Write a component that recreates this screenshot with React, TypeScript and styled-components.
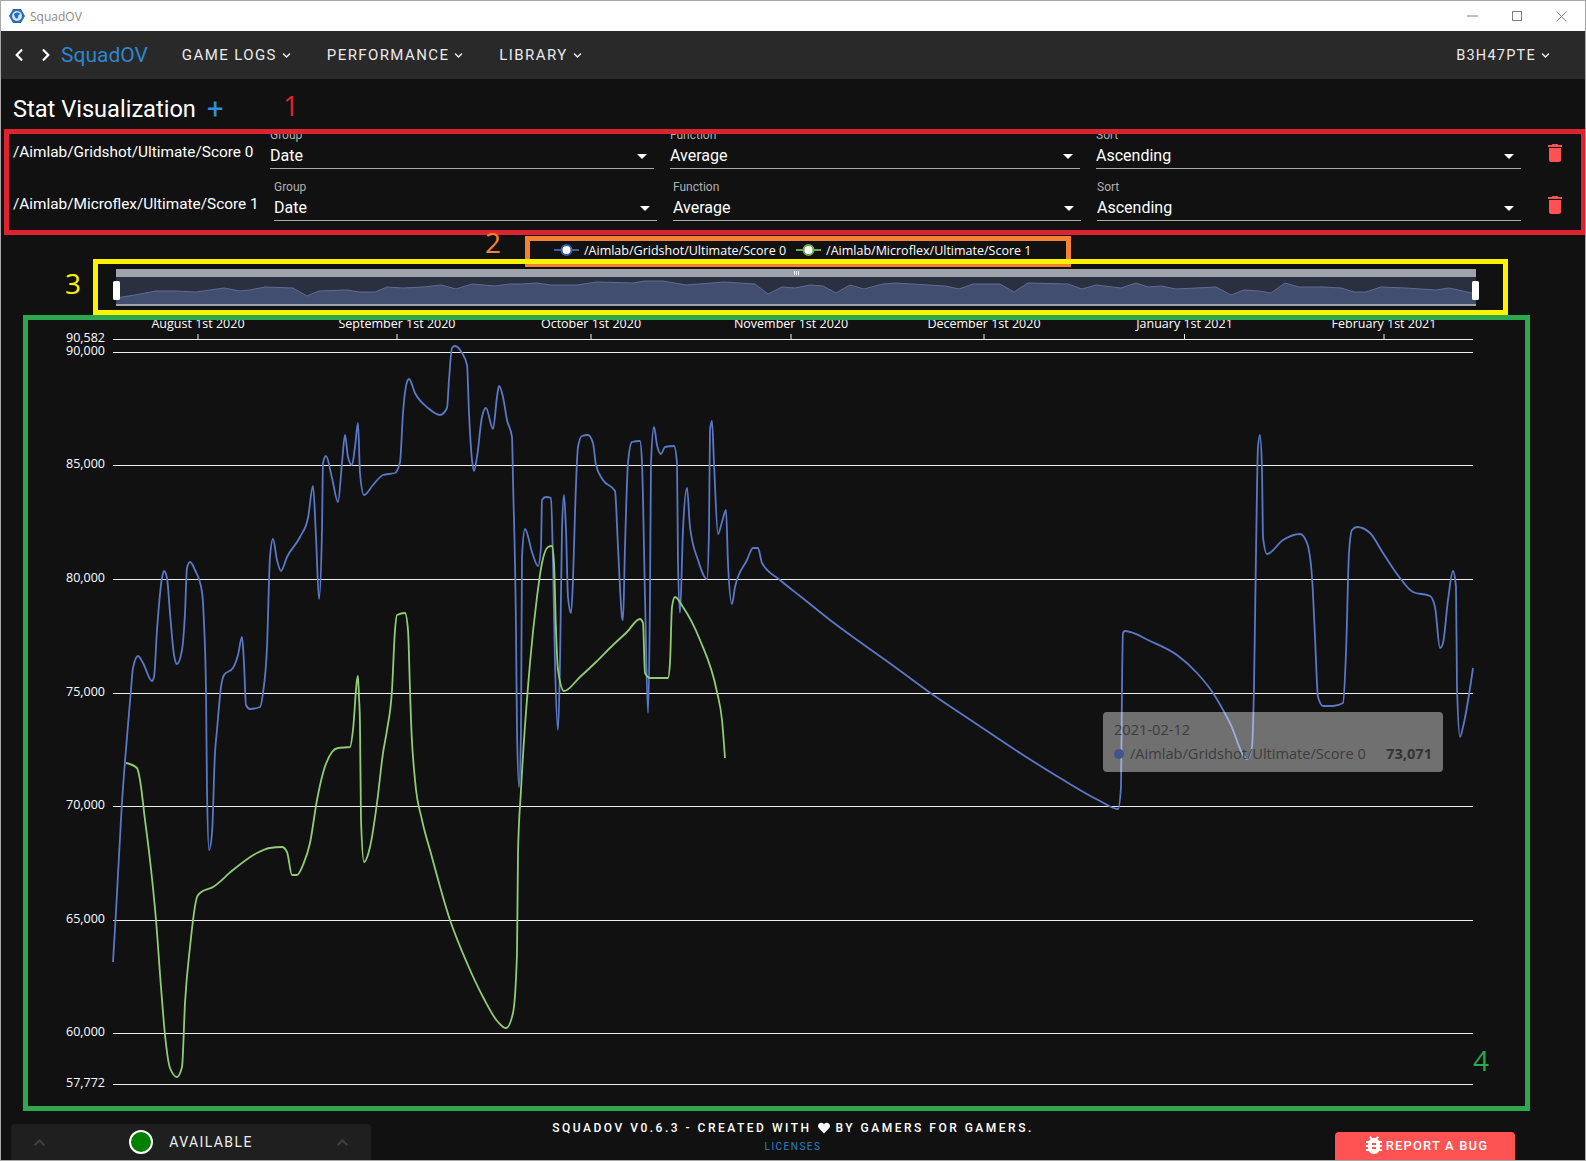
import React from "react";
import styled, { createGlobalStyle } from "styled-components";
import { FaChevronDown, FaChevronLeft, FaChevronRight, FaChevronUp, FaHeart } from "react-icons/fa";

type Pt = [number, number];

const sign = (v: number) => (v < 0 ? -1 : 1);

const smooth = (p: Pt[]) => {
  const n = p.length;
  const t: number[] = new Array(n).fill(0);
  for (let i = 1; i < n - 1; i++) {
    const h0 = p[i][0] - p[i - 1][0];
    const h1 = p[i + 1][0] - p[i][0];
    const s0 = (p[i][1] - p[i - 1][1]) / h0;
    const s1 = (p[i + 1][1] - p[i][1]) / h1;
    const m = (s0 * h1 + s1 * h0) / (h0 + h1);
    t[i] = (sign(s0) + sign(s1)) * Math.min(Math.abs(s0), Math.abs(s1), 0.5 * Math.abs(m));
  }
  t[0] = (3 * (p[1][1] - p[0][1])) / (p[1][0] - p[0][0]) / 2 - t[1] / 2;
  t[n - 1] = (3 * (p[n - 1][1] - p[n - 2][1])) / (p[n - 1][0] - p[n - 2][0]) / 2 - t[n - 2] / 2;
  let d = `M${p[0][0]} ${p[0][1]}`;
  for (let i = 0; i < n - 1; i++) {
    const dx = (p[i + 1][0] - p[i][0]) / 3;
    d += ` C${(p[i][0] + dx).toFixed(1)} ${(p[i][1] + dx * t[i]).toFixed(1)} ${(p[i + 1][0] - dx).toFixed(1)} ${(p[i + 1][1] - dx * t[i + 1]).toFixed(1)} ${p[i + 1][0]} ${p[i + 1][1]}`;
  }
  return d;
};

const straight = (p: Pt[]) => "M" + p.map((q) => `${q[0]} ${q[1]}`).join(" L");

const blue: Pt[] = [
  [113,962],[115.7,917],[121.7,807],[128,725],[130.7,693],[133,668],[138,656],[143,663],[152,681],[154,677],[157,630],[162,578],[164,571],[167,578],[170,613],[174,655],[177,664],[182,650],[185,613],[187,568],[190,562],[195,570],[202,592],[204,623],[206,690],[207,790],[209,850],[212,833],[215,753],[217,730],[221,687],[224,675],[233,668],[238,655],[242,637],[244,663],[246,705],[250,709],[260,707],[263,693],[267,647],[270,557],[273,539],[277,560],[281,571],[287,557],[300,537],[308,518],[313,486],[316,537],[319,599],[322,530],[323,463],[326,456],[332,478],[338,502],[342,463],[345,435],[348,457],[352,465],[355,447],[358,423],[360,473],[364,495],[373,485],[383,475],[395,473],[400,462],[403,413],[407,382],[409,379],[415,393],[428,408],[440,415],[447,408],[449,380],[452,348],[455,346],[462,353],[467,365],[469,413],[472,460],[474,471],[477,457],[482,417],[486,408],[493,429],[497,397],[499,386],[503,397],[507,420],[512,437],[513,480],[516,630],[517,730],[519,787],[521,730],[522,557],[525,529],[532,552],[538,566],[541,547],[542,500],[546,497],[551,498],[553,563],[555,663],[558,730],[560,663],[562,530],[564,495],[566,530],[568,597],[571,613],[573,580],[575,513],[578,447],[582,436],[588,435],[593,443],[596,465],[603,480],[615,491],[618,547],[622,617],[623,620],[625,547],[628,463],[632,442],[640,441],[642,463],[645,597],[648,713],[650,597],[651,463],[654,427],[657,445],[661,454],[665,447],[674,446],[677,463],[678,563],[680,613],[683,530],[687,488],[690,527],[698,560],[707,579],[709,530],[710,430],[712,421],[714,463],[718,534],[722,522],[726,510],[728,563],[732,604],[735,587],[747,560],[753,548],[758,548],[762,563],[780,580],[800,596],[830,620],[860,642],[895,667],[929,692],[975,723],[1020,753],[1060,778],[1100,801],[1118,809],[1121,787],[1122,687],[1123,633],[1125,631],[1150,641],[1177,655],[1197,673],[1213,693],[1230,723],[1247,759],[1252,747],[1254,687],[1256,553],[1258,447],[1260,435],[1262,470],[1263,537],[1267,554],[1283,540],[1300,534],[1307,543],[1312,577],[1315,637],[1318,697],[1323,706],[1333,706],[1343,703],[1346,653],[1349,553],[1352,530],[1357,527],[1370,533],[1383,553],[1400,578],[1413,592],[1430,596],[1435,607],[1440,648],[1443,643],[1448,600],[1453,571],[1456,587],[1457,687],[1460,737],[1463,727],[1473,668],
];

const green: Pt[] = [
  [126,763],[137,768],[140,780],[145,820],[150,860],[156,920],[161,987],[165,1035],[170,1068],[177,1077],[182,1067],[185,1003],[190,947],[197,897],[200,893],[213,887],[233,870],[257,853],[270,848],[282,847],[287,852],[292,875],[297,875],[303,865],[310,843],[317,800],[323,773],[332,752],[338,748],[350,747],[353,730],[357,680],[358,676],[359,697],[360,725],[361,820],[364,862],[370,847],[377,803],[383,753],[387,730],[392,690],[395,630],[397,615],[405,613],[408,630],[410,690],[411,720],[415,780],[422,820],[430,850],[450,920],[467,963],[483,997],[498,1022],[506,1028],[513,1013],[517,953],[518,853],[521,790],[530,663],[537,597],[542,563],[548,547],[552,546],[554,563],[556,630],[558,670],[564,691],[580,677],[596,662],[613,645],[627,632],[640,619],[643,623],[645,673],[650,678],[668,678],[670,663],[672,607],[675,597],[683,607],[700,640],[717,692],[722,720],[725,758],
];

const overview: Pt[] = [
  [116,298],[135,295],[156,291],[176,291],[196,292],[224,288],[240,291],[250,290],[265,287],[293,288],[307,296],[319,291],[347,290],[360,292],[375,292],[387,287],[403,288],[423,287],[441,285],[456,289],[472,284],[495,286],[510,284],[523,284],[536,283],[551,285],[577,285],[597,282],[633,283],[645,281],[663,281],[686,285],[712,283],[724,282],[755,284],[768,294],[782,287],[795,288],[810,285],[823,286],[836,293],[850,285],[864,289],[883,284],[895,283],[945,286],[959,289],[973,284],[1000,284],[1014,292],[1028,283],[1068,284],[1082,289],[1096,285],[1121,288],[1136,283],[1148,287],[1161,286],[1176,289],[1216,287],[1231,295],[1244,290],[1259,291],[1271,293],[1285,283],[1299,287],[1324,287],[1341,288],[1354,292],[1366,292],[1381,287],[1406,288],[1436,290],[1449,288],[1472,293],
];

const hLines = [
  { y: 339.5, label: "90,582" },
  { y: 352.5, label: "90,000" },
  { y: 465.5, label: "85,000" },
  { y: 579.5, label: "80,000" },
  { y: 693.5, label: "75,000" },
  { y: 806.5, label: "70,000" },
  { y: 920.5, label: "65,000" },
  { y: 1033.5, label: "60,000" },
  { y: 1084.5, label: "57,772" },
];

const ticks = [
  { x: 198, label: "August 1st 2020" },
  { x: 397, label: "September 1st 2020" },
  { x: 591, label: "October 1st 2020" },
  { x: 791, label: "November 1st 2020" },
  { x: 984, label: "December 1st 2020" },
  { x: 1184.5, label: "January 1st 2021" },
  { x: 1384, label: "February 1st 2021" },
];

const rows = [
  { name: "/Aimlab/Gridshot/Ultimate/Score 0", cols: "257px 400px 426px 441px 1fr" },
  { name: "/Aimlab/Microflex/Ultimate/Score 1", cols: "261px 399px 424px 440px 1fr" },
];

const GlobalStyle = createGlobalStyle`
  html, body { margin: 0; padding: 0; background: #111; }
  * { box-sizing: border-box; }
`;

const Frame = styled.div`
  position: relative;
  width: 1586px;
  height: 1161px;
  border: 1px solid #a8a8a8;
  background: #111;
  color: #fff;
  font-family: Roboto, "Liberation Sans", sans-serif;
  display: flex;
  flex-direction: column;
  overflow: hidden;
`;

const TitleBar = styled.div`
  height: 30px;
  flex: none;
  background: #fff;
  display: flex;
  align-items: center;
  padding-left: 8px;
  gap: 5px;
  font-family: "Open Sans", sans-serif;
  font-size: 12px;
  color: #8a8a8a;
`;

const WindowControls = styled.div`
  margin-left: auto;
  display: flex;
  align-items: center;
  padding-right: 18px;
  svg { margin-left: 34px; display: block; }
`;

const Nav = styled.nav`
  height: 48px;
  flex: none;
  background: #292929;
  display: flex;
  align-items: center;
  padding: 0 35px 0 11px;
`;

const NavArrow = styled.button<{ $gap: number }>`
  background: none;
  border: 0;
  padding: 0;
  color: #fff;
  display: flex;
  margin-right: ${(p) => p.$gap}px;
  font-size: 14px;
`;

const Brand = styled.span`
  font-size: 21px;
  color: #2f86c9;
  margin-left: 1px;
  margin-right: 34px;
`;

const NavItem = styled.span<{ $right?: boolean }>`
  display: inline-flex;
  align-items: center;
  gap: 5px;
  font-size: 15px;
  font-weight: 400;
  letter-spacing: 1.4px;
  color: #eaeaea;
  margin-right: 36px;
  ${(p) => p.$right && "margin-left: auto; margin-right: 0; font-size: 14.5px; letter-spacing: 1.25px;"}
  svg { font-size: 9px; }
`;

const Heading = styled.h1`
  margin: 0;
  padding: 14px 0 4px 12px;
  font-size: 23.6px;
  line-height: 32px;
  font-weight: 400;
  display: flex;
  align-items: center;
  gap: 11px;
  color: #fff;
`;

const Plus = styled.span`
  color: #2f8fdc;
  font-size: 29px;
  font-weight: 400;
  line-height: 32px;
`;

const RowList = styled.div`
  display: flex;
  flex-direction: column;
  gap: 4px;
`;

const Row = styled.div<{ $cols: string }>`
  height: 48px;
  padding-left: 12px;
  display: grid;
  grid-template-columns: ${(p) => p.$cols};
  align-items: center;
`;

const RowName = styled.div`
  font-size: 15.35px;
  white-space: nowrap;
  padding-bottom: 2px;
`;

const Field = styled.div`
  align-self: start;
  margin-right: 16px;
`;

const FieldLabel = styled.div`
  font-size: 12px;
  line-height: 12px;
  color: #b0b0b0;
`;

const Control = styled.div`
  margin-top: 4px;
  height: 24px;
  display: flex;
  align-items: center;
  justify-content: space-between;
  font-size: 16px;
  padding-bottom: 2px;
  border-bottom: 1px solid #aaa;
  svg { display: block; flex: none; }
`;

const Trash = styled.div`
  display: flex;
  padding-left: 6px;
  color: #ff5252;
  svg { display: block; }
`;

const Legend = styled.div`
  height: 24px;
  margin-top: 9px;
  margin-bottom: 1px;
  display: flex;
  align-items: center;
  font-family: "Open Sans", sans-serif;
  font-size: 12.5px;
  color: #fff;
  padding-left: 553px;
`;

const LegendItem = styled.span`
  display: inline-flex;
  align-items: center;
  gap: 5px;
  margin-right: 10px;
  svg { display: block; }
`;

const ChartSvg = styled.svg`
  display: block;
  flex: none;
  text {
    font-family: "Open Sans", sans-serif;
    font-size: 12.5px;
    fill: #fff;
  }
`;

const ChartArea = styled.div`
  position: relative;
  flex: none;
`;

const Tooltip = styled.div`
  position: absolute;
  left: 1102px;
  top: 399px;
  width: 340px;
  height: 60px;
  padding: 8px 11px;
  background: rgba(255, 255, 255, 0.4);
  border-radius: 4px;
  font-family: "Open Sans", sans-serif;
  font-size: 14.6px;
  line-height: 19px;
  color: #3c3c3c;
`;

const TipRow = styled.div`
  display: flex;
  align-items: center;
  margin-top: 5px;
`;

const TipDot = styled.span`
  width: 10px;
  height: 10px;
  border-radius: 50%;
  background: #3f558f;
  margin-right: 6px;
`;

const TipValue = styled.b`
  margin-left: auto;
  font-weight: 700;
  font-size: 14.6px;
  color: #333;
`;

const Footer = styled.footer`
  flex: 1;
  display: grid;
  grid-template-columns: 1fr auto 1fr;
  padding: 0 10px;
`;

const Status = styled.div`
  align-self: end;
  justify-self: start;
  width: 360px;
  height: 36px;
  padding: 0 22px;
  background: #1f1f1f;
  border-radius: 4px 4px 0 0;
  display: flex;
  align-items: center;
  justify-content: space-between;
  color: #3f3f3f;
  font-size: 13px;
`;

const StatusGroup = styled.div`
  display: flex;
  align-items: center;
  gap: 16px;
  font-size: 14px;
  letter-spacing: 1.4px;
  color: #eee;
`;

const StatusDot = styled.span`
  width: 24px;
  height: 24px;
  border-radius: 50%;
  background: #008000;
  border: 2px solid #fff;
`;

const Credits = styled.div`
  padding-top: 10px;
  text-align: center;
`;

const CreditLine = styled.div`
  display: flex;
  align-items: center;
  justify-content: center;
  gap: 6px;
  font-size: 12px;
  line-height: 16px;
  font-weight: 500;
  letter-spacing: 2.5px;
  white-space: nowrap;
`;

const Licenses = styled.div`
  margin-top: 3px;
  font-size: 10px;
  line-height: 16px;
  letter-spacing: 1.5px;
  color: #2f7fc4;
`;

const BugButton = styled.button`
  align-self: end;
  justify-self: end;
  margin-right: 60px;
  width: 180px;
  height: 28px;
  border: 0;
  border-radius: 4px 4px 0 0;
  background: #ff5252;
  color: #fff;
  font-family: Roboto, sans-serif;
  font-size: 13px;
  font-weight: 500;
  letter-spacing: 1.15px;
  display: flex;
  align-items: center;
  justify-content: center;
  padding: 0 0 2px;
`;

const Mark = styled.div<{ $x: number; $y: number; $w: number; $h: number; $c: string }>`
  position: absolute;
  left: ${(p) => p.$x - 1}px;
  top: ${(p) => p.$y - 1}px;
  width: ${(p) => p.$w}px;
  height: ${(p) => p.$h}px;
  border: 5px solid ${(p) => p.$c};
  pointer-events: none;
`;

const MarkNumber = styled.span<{ $x: number; $y: number; $c: string }>`
  position: absolute;
  left: ${(p) => p.$x - 1}px;
  top: ${(p) => p.$y - 1}px;
  font-family: "Open Sans", sans-serif;
  font-size: 28px;
  line-height: 32px;
  color: ${(p) => p.$c};
`;

const SelectField = ({ label, value }: { label: string; value: string }) => (
  <Field>
    <FieldLabel>{label}</FieldLabel>
    <Control>
      {value}
      <svg width="24" height="24" viewBox="0 0 24 24" fill="#fff">
        <path d="M7 10l5 5 5-5z" />
      </svg>
    </Control>
  </Field>
);

const LegendMarker = ({ color }: { color: string }) => (
  <svg width="25" height="14" viewBox="0 0 25 14">
    <line x1="0" y1="7" x2="25" y2="7" stroke={color} strokeWidth="2" />
    <circle cx="12.5" cy="7" r="5" fill="#fff" stroke={color} strokeWidth="2" />
  </svg>
);

export default function App() {
  return (
    <Frame>
      <GlobalStyle />
      <TitleBar>
        <svg width="16" height="16" viewBox="0 0 16 16">
          <polygon points="4,1 12,1 16,8 12,15 4,15 0,8" fill="#2b6cb3" />
          <circle cx="8" cy="8" r="5" fill="#cfe3f6" />
          <path d="M5 6c2-2 5-2 6 0-1 1-2 1-2 3s-2 2-3 0-1-2-1-3z" fill="#2b6cb3" />
        </svg>
        SquadOV
        <WindowControls>
          <svg width="11" height="12" viewBox="0 0 11 12">
            <line x1="0" y1="6" x2="11" y2="6" stroke="#808080" />
          </svg>
          <svg width="10" height="10" viewBox="0 0 10 10">
            <rect x="0.5" y="0.5" width="9" height="9" fill="none" stroke="#808080" />
          </svg>
          <svg width="11" height="11" viewBox="0 0 11 11">
            <path d="M0.5 0.5l10 10M10.5 0.5l-10 10" stroke="#808080" fill="none" />
          </svg>
        </WindowControls>
      </TitleBar>
      <Nav>
        <NavArrow $gap={13}><FaChevronLeft /></NavArrow>
        <NavArrow $gap={7}><FaChevronRight /></NavArrow>
        <Brand>SquadOV</Brand>
        <NavItem>GAME LOGS <FaChevronDown /></NavItem>
        <NavItem>PERFORMANCE <FaChevronDown /></NavItem>
        <NavItem>LIBRARY <FaChevronDown /></NavItem>
        <NavItem $right>B3H47PTE <FaChevronDown /></NavItem>
      </Nav>
      <Heading>
        Stat Visualization <Plus>+</Plus>
      </Heading>
      <RowList>
        {rows.map((r) => (
          <Row key={r.name} $cols={r.cols}>
            <RowName>{r.name}</RowName>
            <SelectField label="Group" value="Date" />
            <SelectField label="Function" value="Average" />
            <SelectField label="Sort" value="Ascending" />
            <Trash>
              <svg width="24" height="24" viewBox="0 0 24 24" fill="currentColor">
                <path d="M6 19c0 1.1.9 2 2 2h8c1.1 0 2-.9 2-2V7H6v12zM19 4h-3.5l-1-1h-5l-1 1H5v2h14V4z" />
              </svg>
            </Trash>
          </Row>
        ))}
      </RowList>
      <Legend>
        <LegendItem><LegendMarker color="#3f5cab" />/Aimlab/Gridshot/Ultimate/Score 0</LegendItem>
        <LegendItem><LegendMarker color="#6fa854" />/Aimlab/Microflex/Ultimate/Score 1</LegendItem>
      </Legend>
      <ChartSvg width="1584" height="50" viewBox="1 263 1584 50">
        <rect x="116" y="269" width="1360" height="37" fill="#2b3040" />
        <path d={`${straight(overview)} L1476 293 L1476 304 L116 304 Z`} fill="#414e6f" />
        <path d={straight(overview)} fill="none" stroke="#5d6c92" strokeWidth="1" />
        <rect x="116" y="269" width="1360" height="8" fill="#9fa3ad" />
        <rect x="116" y="304" width="1360" height="2" fill="#9fa3ad" />
        <rect x="794" y="271" width="1" height="4" fill="#eee" />
        <rect x="796" y="271" width="1" height="4" fill="#eee" />
        <rect x="798" y="271" width="1" height="4" fill="#eee" />
        <rect x="113" y="281" width="7" height="19" rx="1.5" fill="#fff" />
        <rect x="1472" y="281" width="7" height="19" rx="1.5" fill="#fff" />
      </ChartSvg>
      <ChartArea>
        <ChartSvg width="1584" height="797" viewBox="1 313 1584 797">
          {hLines.map((l) => (
            <g key={l.label}>
              <line x1="113" x2="1473" y1={l.y} y2={l.y} stroke="#eee" strokeWidth="1" />
              <text x="105" y={l.y - 0.5} textAnchor="end" dominantBaseline="middle">{l.label}</text>
            </g>
          ))}
          {ticks.map((t) => (
            <g key={t.label}>
              <line x1={t.x} x2={t.x} y1="334" y2="339" stroke="#eee" strokeWidth="1" />
              <text x={t.x} y="328" textAnchor="middle">{t.label}</text>
            </g>
          ))}
          <path d={smooth(blue)} fill="none" stroke="#5b78c6" strokeWidth="1.8" />
          <path d={smooth(green)} fill="none" stroke="#91cc75" strokeWidth="1.8" />
        </ChartSvg>
        <Tooltip>
          2021-02-12
          <TipRow>
            <TipDot />
            /Aimlab/Gridshot/Ultimate/Score 0
            <TipValue>73,071</TipValue>
          </TipRow>
        </Tooltip>
      </ChartArea>
      <Footer>
        <Status>
          <FaChevronUp />
          <StatusGroup>
            <StatusDot />
            AVAILABLE
          </StatusGroup>
          <FaChevronUp />
        </Status>
        <Credits>
          <CreditLine>
            SQUADOV V0.6.3 - CREATED WITH <FaHeart size={12} /> BY GAMERS FOR GAMERS.
          </CreditLine>
          <Licenses>LICENSES</Licenses>
        </Credits>
        <BugButton>
          <svg width="24" height="24" viewBox="0 0 24 24" fill="#fff">
            <path d="M14,12H10V10H14M14,16H10V14H14M20,8H17.19C16.74,7.22 16.12,6.55 15.37,6.04L17,4.41L15.59,3L13.42,5.17C12.96,5.06 12.5,5 12,5C11.5,5 11.04,5.06 10.59,5.17L8.41,3L7,4.41L8.62,6.04C7.88,6.55 7.26,7.22 6.81,8H4V10H6.09C6.04,10.33 6,10.66 6,11V12H4V14H6V15C6,15.34 6.04,15.67 6.09,16H4V18H6.81C7.85,19.79 9.78,21 12,21C14.22,21 16.15,19.79 17.19,18H20V16H17.91C17.96,15.67 18,15.34 18,15V14H20V12H18V11C18,10.66 17.96,10.33 17.91,10H20V8Z" />
          </svg>
          REPORT A BUG
        </BugButton>
      </Footer>
      <Mark $x={4} $y={129} $w={1582} $h={106} $c="#dc2330" />
      <Mark $x={525} $y={236} $w={546} $h={31} $c="#f58233" />
      <Mark $x={93} $y={259} $w={1415} $h={56} $c="#fff200" />
      <Mark $x={23} $y={315} $w={1507} $h={796} $c="#2da84f" />
      <MarkNumber $x={283} $y={89} $c="#dc2330">1</MarkNumber>
      <MarkNumber $x={485} $y={226} $c="#f58233">2</MarkNumber>
      <MarkNumber $x={65} $y={267} $c="#fff200">3</MarkNumber>
      <MarkNumber $x={1473} $y={1044} $c="#2da84f">4</MarkNumber>
    </Frame>
  );
}
